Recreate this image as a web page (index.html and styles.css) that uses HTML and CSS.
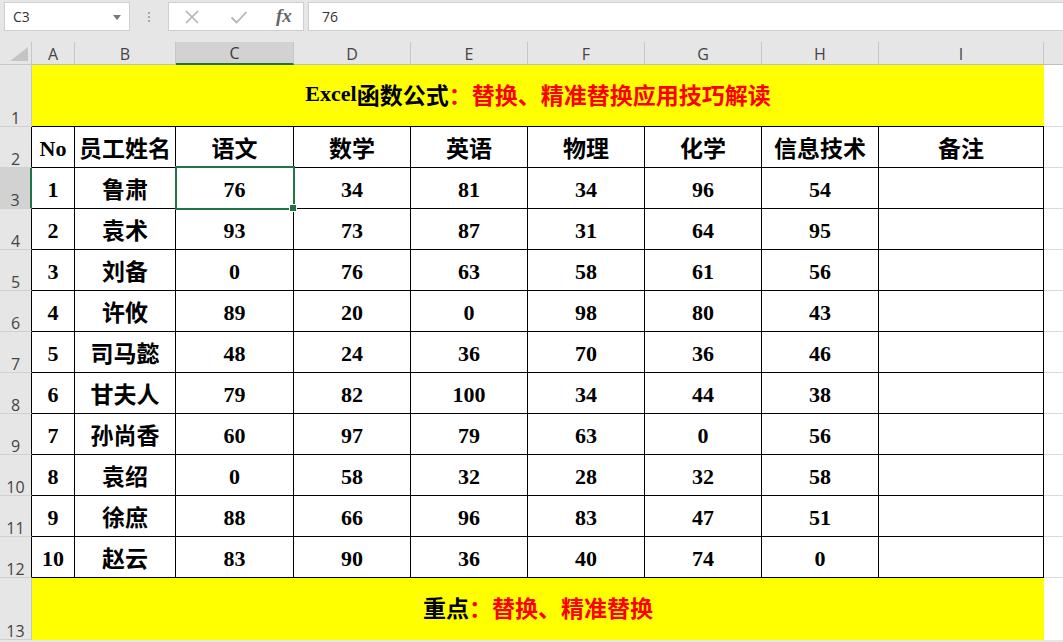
FILE: index.html
```html
<!DOCTYPE html>
<html lang="zh">
<head>
<meta charset="utf-8">
<title>Excel</title>
<link rel="stylesheet" href="styles.css">
</head>
<body>
<div class="fbar">
  <div class="namebox"><span class="ref">C3</span><svg class="dd" width="8" height="5" viewBox="0 0 8 5"><path d="M0 0H8L4 5Z" fill="#777"/></svg></div>
  <div class="grip"><i></i><i></i><i></i></div>
  <div class="fbtns">
    <svg class="ico" width="16" height="16" viewBox="0 0 16 16"><path d="M2 2L14 14M14 2L2 14" stroke="#b4b4b4" stroke-width="1.6" fill="none"/></svg>
    <svg class="ico" width="18" height="16" viewBox="0 0 18 16"><path d="M1.5 8.5L6.5 13.5L16.5 3" stroke="#b4b4b4" stroke-width="1.8" fill="none"/></svg>
    <span class="fx">fx</span>
  </div>
  <div class="formula">76</div>
</div>
<div class="sheet">
  <div class="corner"><svg width="18" height="14" viewBox="0 0 18 14"><path d="M18 0V14H0Z" fill="#c4c4c4"/></svg></div>
  <div class="ch">A</div><div class="ch">B</div><div class="ch csel">C</div><div class="ch">D</div><div class="ch">E</div><div class="ch">F</div><div class="ch">G</div><div class="ch">H</div><div class="ch">I</div><div class="ch chj"></div>

  <div class="rh">1</div>
  <div class="title">Excel<span class="zh">函数公式</span><span class="red zh">：替换、精准替换应用技巧解读</span></div>
  <div class="j j1"></div>

  <div class="rh rk">2</div>
  <div class="c ca">No</div><div class="c zh">员工姓名</div><div class="c zh">语文</div><div class="c zh">数学</div><div class="c zh">英语</div><div class="c zh">物理</div><div class="c zh">化学</div><div class="c zh">信息技术</div><div class="c zh">备注</div><div class="j"></div>

  <div class="rh rk rsel">3</div>
  <div class="c ca">1</div><div class="c zh">鲁肃</div><div class="c sel">76</div><div class="c">34</div><div class="c">81</div><div class="c">34</div><div class="c">96</div><div class="c">54</div><div class="c"></div><div class="j"></div>

  <div class="rh rk">4</div>
  <div class="c ca">2</div><div class="c zh">袁术</div><div class="c">93</div><div class="c">73</div><div class="c">87</div><div class="c">31</div><div class="c">64</div><div class="c">95</div><div class="c"></div><div class="j"></div>

  <div class="rh rk">5</div>
  <div class="c ca">3</div><div class="c zh">刘备</div><div class="c">0</div><div class="c">76</div><div class="c">63</div><div class="c">58</div><div class="c">61</div><div class="c">56</div><div class="c"></div><div class="j"></div>

  <div class="rh rk">6</div>
  <div class="c ca">4</div><div class="c zh">许攸</div><div class="c">89</div><div class="c">20</div><div class="c">0</div><div class="c">98</div><div class="c">80</div><div class="c">43</div><div class="c"></div><div class="j"></div>

  <div class="rh rk">7</div>
  <div class="c ca">5</div><div class="c zh">司马懿</div><div class="c">48</div><div class="c">24</div><div class="c">36</div><div class="c">70</div><div class="c">36</div><div class="c">46</div><div class="c"></div><div class="j"></div>

  <div class="rh rk">8</div>
  <div class="c ca">6</div><div class="c zh">甘夫人</div><div class="c">79</div><div class="c">82</div><div class="c">100</div><div class="c">34</div><div class="c">44</div><div class="c">38</div><div class="c"></div><div class="j"></div>

  <div class="rh rk">9</div>
  <div class="c ca">7</div><div class="c zh">孙尚香</div><div class="c">60</div><div class="c">97</div><div class="c">79</div><div class="c">63</div><div class="c">0</div><div class="c">56</div><div class="c"></div><div class="j"></div>

  <div class="rh rk">10</div>
  <div class="c ca">8</div><div class="c zh">袁绍</div><div class="c">0</div><div class="c">58</div><div class="c">32</div><div class="c">28</div><div class="c">32</div><div class="c">58</div><div class="c"></div><div class="j"></div>

  <div class="rh rk">11</div>
  <div class="c ca">9</div><div class="c zh">徐庶</div><div class="c">88</div><div class="c">66</div><div class="c">96</div><div class="c">83</div><div class="c">47</div><div class="c">51</div><div class="c"></div><div class="j"></div>

  <div class="rh rk">12</div>
  <div class="c ca">10</div><div class="c zh">赵云</div><div class="c">83</div><div class="c">90</div><div class="c">36</div><div class="c">40</div><div class="c">74</div><div class="c">0</div><div class="c"></div><div class="j"></div>

  <div class="rh">13</div>
  <div class="title foot"><span class="zh">重点</span><span class="red zh">：替换、精准替换</span></div>
  <div class="j j13"></div>
</div>
</body>
</html>
```
FILE: styles.css
```css
* { box-sizing: border-box; }
html, body { margin: 0; padding: 0; }
body {
  width: 1063px;
  height: 642px;
  overflow: hidden;
  background: #e6e6e6;
  font-family: "Liberation Sans", "Noto Sans CJK SC", sans-serif;
}
.fbar {
  height: 42px;
  display: flex;
  align-items: flex-start;
  padding-top: 2px;
  background: #e6e6e6;
}
.namebox {
  margin-left: 4px;
  width: 126px;
  height: 29px;
  background: #fff;
  border: 1px solid #cfcfcf;
  display: flex;
  align-items: center;
  justify-content: space-between;
  padding: 0 8px 0 8px;
  font-family: "Open Sans", "Liberation Sans", sans-serif;
  font-size: 14px;
  color: #333;
}
.dd { margin-top: 1px; }
.grip {
  width: 38px;
  height: 29px;
  display: flex;
  flex-direction: column;
  align-items: center;
  justify-content: center;
  gap: 2px;
}
.grip i {
  display: block;
  width: 2px;
  height: 2px;
  background: #a8a8a8;
}
.fbtns {
  width: 136px;
  height: 29px;
  background: #fff;
  border: 1px solid #cfcfcf;
  display: flex;
  align-items: center;
  padding-left: 15px;
  gap: 30px;
}
.fx {
  font-family: "Liberation Serif", serif;
  font-style: italic;
  font-weight: bold;
  font-size: 19px;
  color: #666;
  margin-left: -2px;
  margin-top: -2px;
}
.formula {
  margin-left: 4px;
  flex: 1;
  height: 29px;
  background: #fff;
  border: 1px solid #cfcfcf;
  border-right: none;
  padding-left: 13px;
  display: flex;
  align-items: center;
  font-family: "Open Sans", "Liberation Sans", sans-serif;
  font-size: 14px;
  color: #333;
}
.sheet {
  display: grid;
  grid-template-columns: 32px 43px 101px 118px 117px 117px 117px 117px 117px 165px 1fr;
  grid-template-rows: 23px 62px repeat(11, 41px) 62px;
  background: #fff;
}
.corner {
  background: #e6e6e6;
  border-right: 1px solid #c6c6c6;
  border-bottom: 1px solid #c6c6c6;
  display: flex;
  align-items: flex-end;
  justify-content: flex-end;
  padding: 0 3px 3px 0;
}
.ch {
  background: #e6e6e6;
  border-right: 1px solid #c6c6c6;
  border-bottom: 1px solid #bdbdbd;
  display: flex;
  align-items: center;
  justify-content: center;
  font-family: "Open Sans", "Liberation Sans", sans-serif;
  font-size: 16px;
  color: #444;
  padding-top: 1px;
}
.ch.csel {
  background: #d2d2d2;
  border-bottom: 2px solid #217346;
  color: #3a3a3a;
}
.ch.chj { border-right: none; }
.rh {
  background: #e6e6e6;
  border-right: 1px solid #c6c6c6;
  border-bottom: 1px solid #d0d0d0;
  display: flex;
  align-items: flex-end;
  justify-content: center;
  font-family: "Open Sans", "Liberation Sans", sans-serif;
  font-size: 16px;
  color: #444;
  line-height: 16px;
}
.rh.rk { border-right: 1px solid #000; }
.rh.rsel {
  background: #d2d2d2;
  border-right: 2px solid #217346;
}
.title {
  grid-column: span 9;
  background: #ffff00;
  border-bottom: 1px solid #000;
  display: flex;
  align-items: center;
  justify-content: center;
  font-family: "Liberation Serif", "Noto Sans CJK SC", serif;
  font-weight: bold;
  font-size: 22px;
  color: #000;
  padding-bottom: 4px;
}
.title .zh { font-size: 23px; }
.title.foot { border-bottom: none; }
.red { color: #ff0000; }
.j {
  background: #fff;
  border-bottom: 1px solid #dadada;
}
.j.j13 { border-bottom: none; }
.c {
  border-right: 1px solid #000;
  border-bottom: 1px solid #000;
  display: flex;
  align-items: center;
  justify-content: center;
  font-family: "Liberation Serif", "Noto Sans CJK SC", serif;
  font-weight: bold;
  font-size: 22px;
  color: #000;
  padding-top: 4px;
}
.c.zh {
  font-size: 23px;
  padding-top: 0;
  padding-bottom: 1px;
}
.c.sel { position: relative; }
.c.sel::after {
  content: "";
  position: absolute;
  left: -1px;
  top: -2px;
  right: -2px;
  bottom: -2px;
  border: 2px solid #217346;
}
.c.sel::before {
  content: "";
  position: absolute;
  right: -4px;
  bottom: -4px;
  width: 6px;
  height: 6px;
  background: #217346;
  border: 1px solid #fff;
  z-index: 2;
}
```
